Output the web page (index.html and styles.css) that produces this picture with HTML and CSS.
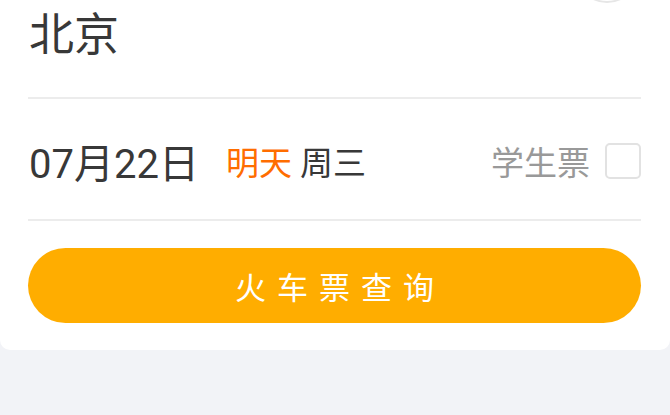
FILE: index.html
```html
<!DOCTYPE html>
<html lang="zh">
<head>
<meta charset="UTF-8" />
<title>火车票查询</title>
<link rel="stylesheet" href="styles.css">
</head>
<body>

<div class="card">
  <span class="swap"></span>

  <div class="row city-row">
    <span class="city">北京</span>
  </div>

  <div class="row date-row">
    <span class="date">07月22日</span>
    <span class="day"><em class="tomorrow">明天</em> 周三</span>
    <label class="student">
      学生票
      <span class="check"></span>
    </label>
  </div>

  <button class="search-btn">火车票查询</button>
</div>

</body>
</html>
```

FILE: styles.css
```css
body {
  margin: 0;
  background: #f2f3f7;
  font-family: Roboto, "Noto Sans CJK SC", sans-serif;
  color: #383838;
}
.card {
  position: relative;
  background: #fff;
  padding: 0 29px 27px 28px;
  border-radius: 0 0 10px 10px;
  overflow: hidden;
}
/* bottom of the swap circle peeking in from above */
.swap {
  position: absolute;
  top: -61px;
  left: 575px;
  width: 60px;
  height: 60px;
  border: 2px solid #e6e6e6;
  border-radius: 50%;
}
.row {
  display: flex;
  align-items: center;
  border-bottom: 2px solid #ececec;
}
.city-row {
  height: 97px;
  align-items: flex-start;
}
.city {
  font-size: 45px;
  line-height: 60px;
  padding-top: 6px;
  padding-left: 1px;
}
.date-row {
  height: 122px;
  padding-top: 3px;
  box-sizing: border-box;
}
.date {
  font-size: 40px;
  padding-left: 1px;
}
.day {
  font-size: 33px;
  margin-left: 27px;
}
.tomorrow {
  font-style: normal;
  color: #ff6d00;
}
.student {
  margin-left: auto;
  display: flex;
  align-items: center;
  font-size: 33px;
  color: #999;
}
.check {
  width: 32px;
  height: 32px;
  margin-left: 15px;
  border: 2px solid #e2e2e2;
  border-radius: 5px;
}
.search-btn {
  display: block;
  width: 100%;
  height: 75px;
  margin-top: 27px;
  border: none;
  border-radius: 38px;
  background: #ffad00;
  color: #fff;
  font-family: "Noto Sans CJK SC", sans-serif;
  font-size: 31px;
  letter-spacing: 11px;
  text-indent: 11px;
  cursor: pointer;
}
```
